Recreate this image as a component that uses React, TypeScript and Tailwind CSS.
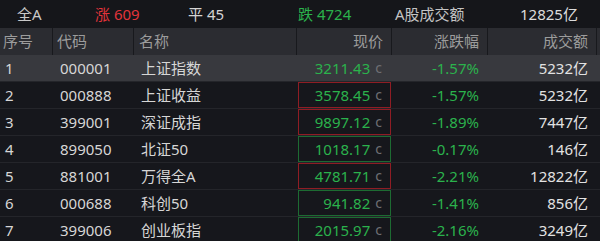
import React from "react"

interface Row {
  no: number
  code: string
  name: string
  price: string
  pct: string
  amount: string
  box?: "up" | "down"
}

const rows: Row[] = [
  { no: 1, code: "000001", name: "上证指数", price: "3211.43", pct: "-1.57%", amount: "5232亿" },
  { no: 2, code: "000888", name: "上证收益", price: "3578.45", pct: "-1.57%", amount: "5232亿", box: "up" },
  { no: 3, code: "399001", name: "深证成指", price: "9897.12", pct: "-1.89%", amount: "7447亿", box: "up" },
  { no: 4, code: "899050", name: "北证50", price: "1018.17", pct: "-0.17%", amount: "146亿", box: "down" },
  { no: 5, code: "881001", name: "万得全A", price: "4781.71", pct: "-2.21%", amount: "12822亿", box: "up" },
  { no: 6, code: "000688", name: "科创50", price: "941.82", pct: "-1.41%", amount: "856亿", box: "down" },
  { no: 7, code: "399006", name: "创业板指", price: "2015.97", pct: "-2.16%", amount: "3249亿", box: "down" },
]

const font = { fontFamily: '"Noto Sans", "Noto Sans CJK SC", sans-serif' }

export default function App() {
  return (
    <div className="w-[600px] h-[241px] overflow-hidden bg-[#16171c] text-[15px] leading-none" style={font}>
      {/* summary bar */}
      <div className="flex items-center h-[28px] bg-[#15161a]">
        <span className="ml-[17px] w-[78px] text-[#c9c9c9]">全A</span>
        <span className="w-[93px] text-[#e3343b]">涨 609</span>
        <span className="w-[110px] text-[#d4d4d4]">平 45</span>
        <span className="w-[97px] text-[#2bb24c]">跌 4724</span>
        <span className="w-[125px] text-[#c4c4c4]">A股成交额</span>
        <span className="text-[#dcdcdc]">12825亿</span>
      </div>

      {/* header */}
      <div className="grid grid-cols-[53px_81px_163px_95px_96px_109px_3px] h-[27px] bg-[#2b2c31] text-[#9c9c9c]">
        <div className="flex items-center pl-[3px] border-r border-[#18191d]">序号</div>
        <div className="flex items-center pl-[4px] border-r border-[#18191d]">代码</div>
        <div className="flex items-center pl-[5px] border-r border-[#18191d]">名称</div>
        <div className="flex items-center justify-end pr-[8px] border-r border-[#18191d]">现价</div>
        <div className="flex items-center justify-end pr-[8px] border-r border-[#18191d]">涨跌幅</div>
        <div className="flex items-center justify-end pr-[8px] border-r border-[#18191d]">成交额</div>
        <div />
      </div>

      {rows.map((r) => (
        <div
          key={r.no}
          className={
            "grid grid-cols-[53px_81px_163px_95px_96px_109px_3px] h-[27px] border-b border-[#24252a] " +
            (r.no === 1 ? "bg-[#38393e]" : "bg-[#16171c]")
          }
        >
          <div className="flex items-center pl-[5px] text-[#d6d6d6]">{r.no}</div>
          <div className="flex items-center pl-[7px] text-[#d6d6d6]">{r.code}</div>
          <div className="flex items-center pl-[7px] text-[#d6d6d6]">{r.name}</div>
          <div className="flex items-stretch pl-[1px] pr-[1px]">
            <div
              className={
                "flex flex-1 items-center justify-end pr-[8px] border " +
                (r.box === "up"
                  ? "border-[#8f1d24]"
                  : r.box === "down"
                  ? "border-[#1d6b32]"
                  : "border-transparent")
              }
            >
              <span className="text-[#2bb24c]">{r.price}</span>
              <span className="ml-[5px] text-[#6f7074] text-[14px]">c</span>
            </div>
          </div>
          <div className="flex items-center justify-end pr-[9px] text-[#2bb24c]">{r.pct}</div>
          <div className="flex items-center justify-end pr-[9px] text-[#e2e2e2]">{r.amount}</div>
          <div />
        </div>
      ))}
    </div>
  )
}
